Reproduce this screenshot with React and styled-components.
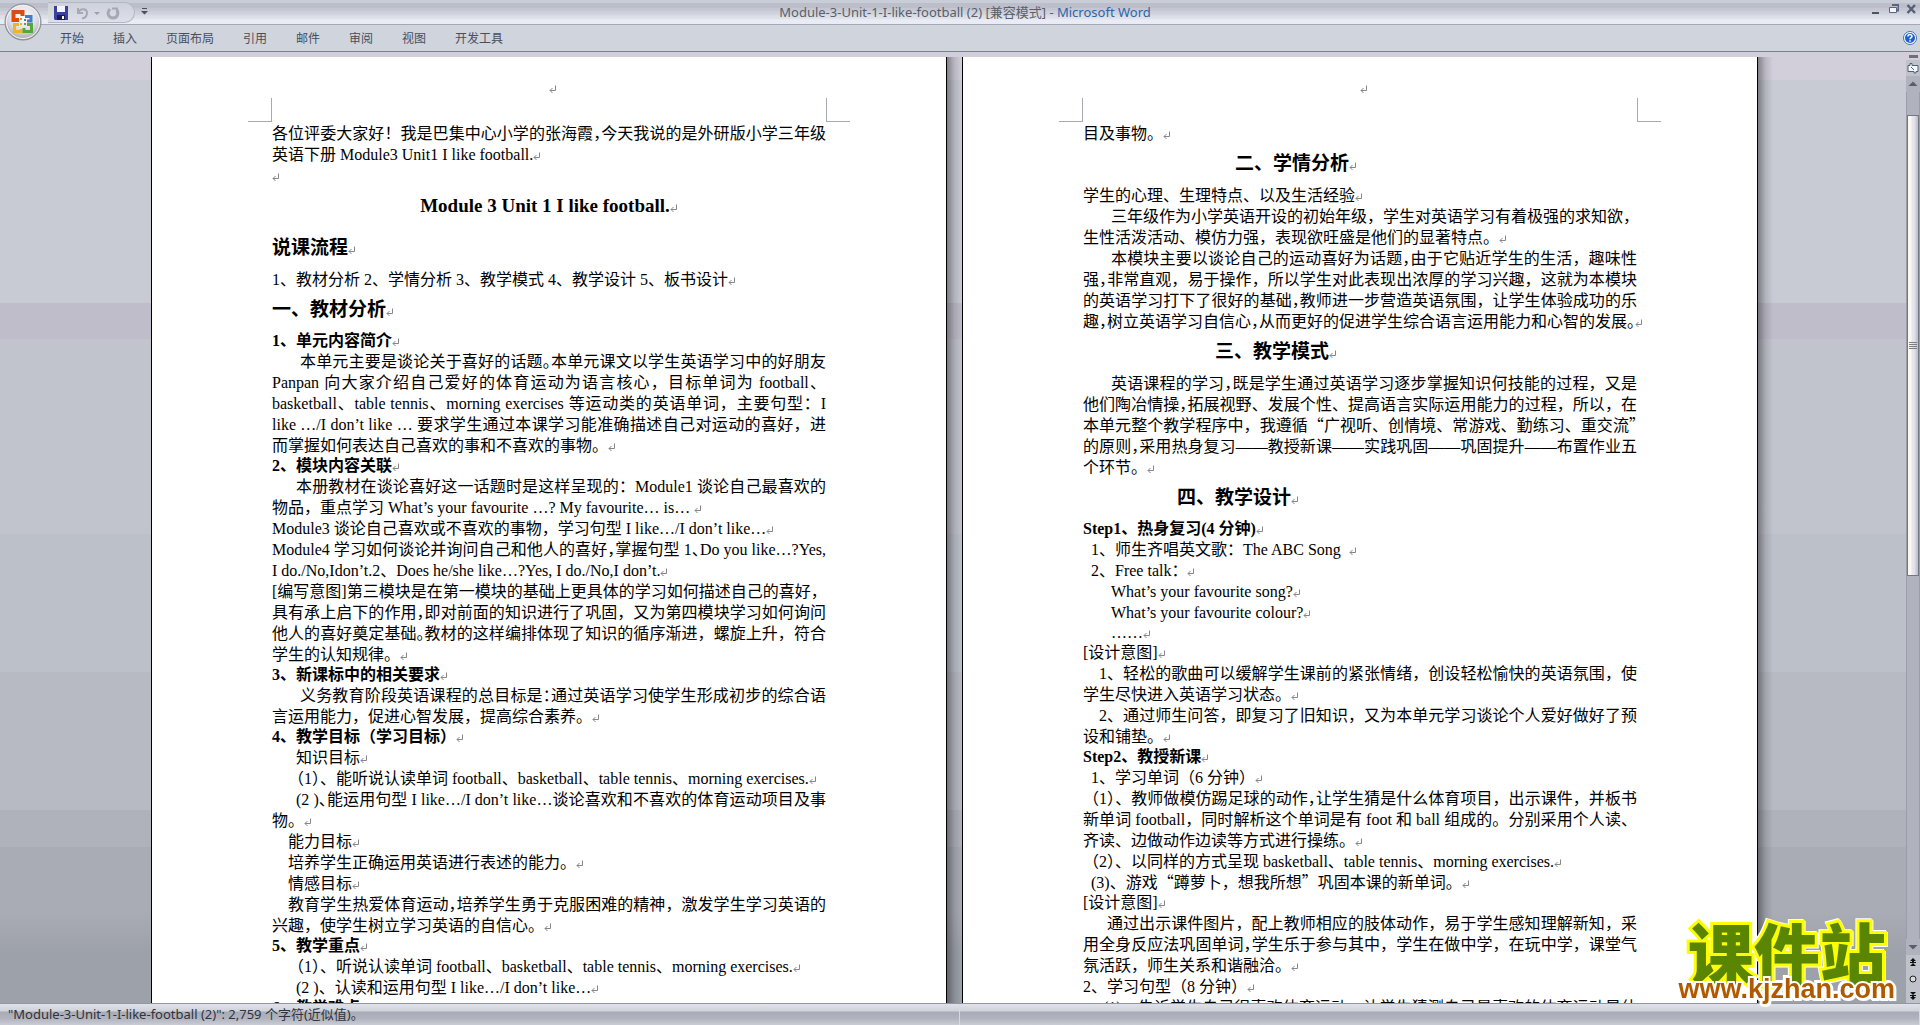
import React from 'react'
import styled, { createGlobalStyle, css } from 'styled-components'

const GlobalStyle = createGlobalStyle`
  * {
    box-sizing: border-box;
  }
  body {
    margin: 0;
    background: #c8cbd3;
  }
  button {
    border: 0;
    padding: 0;
    background: none;
    font: inherit;
    color: inherit;
    display: flex;
    align-items: center;
    justify-content: center;
  }
  svg {
    display: block;
  }
`

const Janela = styled.div`
  display: flex;
  flex-direction: column;
  height: 100vh;
  position: relative;
  overflow: hidden;
  font-family: "Noto Sans", "Noto Sans CJK SC", sans-serif;
  font-size: 12px;
  color: #3f4452;
`
const BarraTitulo = styled.header`
  display: flex;
  align-items: flex-start;
  flex: none;
  height: 25px;
  padding: 2px 2px 0 48px;
  background: linear-gradient(#c9cdd7 0 3px, #bcbfc9 3px 8px, #c4c7d1 8px 10px, #ced2db 12px 14px, #dcdfe7 16px 18px, #e9ecf4 20px);
  border-bottom: 1px solid #a5a8b4;
`
const AcessoRapido = styled.div`
  display: flex;
  align-items: center;
  gap: 6px;
  width: 87px;
  height: 21px;
  padding-left: 6px;
  background: linear-gradient(#ced1da, #dde0e8);
  border: 1px solid #b4b7c2;
  border-left: 0;
  border-radius: 0 11px 11px 0;
`
const MaisComandos = styled.button`
  width: 18px;
  height: 18px;
`
const Titulo = styled.h1`
  flex: 1;
  margin: 0;
  padding-right: 92px;
  text-align: center;
  font-size: 13px;
  line-height: 20px;
  font-weight: 400;
  color: #5b5d6b;
  span {
    color: #2a66ad;
  }
`
const BotoesJanela = styled.div`
  display: flex;
  gap: 5px;
  button {
    width: 13px;
    height: 13px;
  }
`
const BotaoOffice = styled.button`
  position: absolute;
  left: 4px;
  top: 3px;
  width: 38px;
  height: 38px;
  z-index: 2;
`
const Faixa = styled.nav`
  display: flex;
  align-items: center;
  flex: none;
  height: 27px;
  padding: 0 3px 0 46px;
  background: #d0d4dd;
  border-bottom: 1px solid #7b818e;
`
const Aba = styled.button`
  height: 26px;
  padding: 0 14px;
  margin-right: 1px;
  font-size: 12px;
  color: #4a4e5c;
`
const Ajuda = styled.button`
  margin-left: auto;
`
const Area = styled.main`
  display: flex;
  flex: 1;
  min-height: 0;
`
const Mesa = styled.div`
  display: flex;
  flex: 1;
  min-width: 0;
  justify-content: center;
  padding: 5px 0 0 18px;
  overflow: hidden;
  background: linear-gradient(
    #d2cfdb 0 28px,
    #c8cbd4 28px 251px,
    #c0bdcb 251px 287px,
    #c1c4cd 287px 482px,
    #bcc0c9 482px 620px,
    #b7bac3 620px 758px,
    #afb2bb 758px 795px,
    #a9acb5 795px 860px,
    #9da1aa 900px
  );
`
const Pagina = styled.article`
  flex: none;
  width: 796px;
  padding: 0 120px;
  background: #fff;
  border: solid #000;
  border-width: 0 1px;
  font-family: "Liberation Serif", "Noto Sans CJK SC", serif;
  font-size: 16px;
  color: #000;
`
const Sombra = styled.div`
  flex: none;
  width: 15px;
  background: linear-gradient(90deg, rgba(0, 0, 0, 0.38), rgba(0, 0, 0, 0.12) 50%, transparent);
`
const Cabecalho = styled.div`
  display: flex;
  align-items: center;
  justify-content: center;
  height: 41px;
  padding: 24px 0 0 8px;
`
const Cantos = styled.div`
  display: flex;
  justify-content: space-between;
  margin: 0 -24px 1px;
`
const Canto = styled.div`
  width: 24px;
  height: 24px;
  border: solid #a8a8b2;
  border-width: ${props => props.$direito ? '0 0 1px 1px' : '0 1px 1px 0'};
`
const Paragrafo = styled.p`
  margin: 0;
  line-height: ${props => props.$baixo ? 20 : 21}px;
  text-indent: ${props => props.$recuo || 0}px;
`
const Subtitulo = styled.h3`
  margin: 0;
  font-size: 16px;
  line-height: 20px;
`
const Secao = styled.h2`
  margin: 8px 0 9px;
  padding-left: ${props => props.$recuo || 0}px;
  font-size: 19px;
  line-height: 24px;
  ${props => props.$centro && css`
    margin-bottom: 18px;
    text-align: center;
  `}
`
const Linha = styled.span`
  display: block;
  white-space: pre;
  text-align-last: ${props => props.$cheia ? 'justify' : 'auto'};
  & + & {
    text-indent: 0;
  }
`
const Pontuacao = styled.span`
  font-family: "Noto Sans CJK SC", sans-serif;
  line-height: 1;
  font-feature-settings: ${props => props.$meia ? '"halt"' : 'normal'};
`
const Marca = styled.svg`
  display: inline-block;
  vertical-align: -1px;
`
const Rolagem = styled.aside`
  display: flex;
  flex-direction: column;
  flex: none;
  width: 14px;
  background: #b9bcc5;
`
const Divisor = styled.div`
  flex: none;
  height: 8px;
  padding: 3px 2px 2px 3px;
  background: #d2cfdb;
  &::before {
    content: "";
    display: block;
    height: 3px;
    background: #6d7079;
  }
`
const BotaoRolagem = styled.button`
  flex: none;
  height: 16px;
  background: ${props => props.$claro ? '#bfc2cb' : '#b0b3bd'};
`
const Trilho = styled.div`
  flex: 1;
  padding-top: 23px;
  background: #b0b3bd;
  border: solid #9b9ea8;
  border-width: 0 1px;
`
const Alca = styled.div`
  display: flex;
  align-items: center;
  justify-content: center;
  height: 56%;
  border: 1px solid #74777f;
  background: linear-gradient(90deg, #fbf9ef 0 3px, #e6e4ee 4px 6px, #cdd0db 8px, #b9bdc8);
`
const BarraStatus = styled.footer`
  display: flex;
  flex: none;
  height: 22px;
  border-top: 1px solid #94979f;
  background: linear-gradient(#dfe2e9, #cfd2da 7px, #a9acb6 8px, #b0b3bd 14px, #c9ccd4);
`
const Campo = styled.div`
  flex: 1;
  padding-left: 8px;
  font-size: 13px;
  line-height: 20px;
  color: #2f323c;
  border-right: 1px solid #d8dae1;
`
const Selo = styled.div`
  position: absolute;
  right: 25px;
  bottom: 22px;
  display: flex;
  flex-direction: column;
  align-items: center;
  pointer-events: none;
  filter: drop-shadow(1px 1px 0 #fff) drop-shadow(-1px -1px 0 #fff);
`
const SeloNome = styled.strong`
  font-family: "Noto Sans CJK SC", sans-serif;
  font-size: 66px;
  font-weight: 900;
  line-height: 50px;
  color: #5a8500;
  -webkit-text-stroke: 6px #fcff00;
  paint-order: stroke fill;
`
const SeloSite = styled.span`
  font-family: "Liberation Sans", sans-serif;
  font-size: 27px;
  font-weight: 700;
  line-height: 28px;
  color: #b05a00;
  -webkit-text-stroke: 4px #fff;
  paint-order: stroke fill;
`

const abas = ['开始', '插入', '页面布局', '引用', '邮件', '审阅', '视图', '开发工具']

// "~" before a punctuation mark sets it at half width
const pagina1 = [
  { linhas: ['各位评委大家好！我是巴集中心小学的张海霞~，今天我说的是外研版小学三年级', '英语下册 Module3 Unit1 I like football.'] },
  { linhas: [''] },
  { tipo: 'secao', centro: true, linhas: ['Module 3 Unit 1 I like football.'] },
  { tipo: 'secao', linhas: ['说课流程'] },
  { linhas: ['1、教材分析 2、学情分析 3、教学模式 4、教学设计 5、板书设计'] },
  { tipo: 'secao', linhas: ['一、教材分析'] },
  { tipo: 'sub', linhas: ['1、单元内容简介'] },
  {
    recuo: 28,
    linhas: [
      '本单元主要是谈论关于喜好的话题~。本单元课文以学生英语学习中的好朋友',
      'Panpan 向大家介绍自己爱好的体育运动为语言核心，目标单词为 football、',
      'basketball、table tennis、morning exercises 等运动类的英语单词，主要句型：I',
      'like …/I don’t like … 要求学生通过本课学习能准确描述自己对运动的喜好，进',
      '而掌握如何表达自己喜欢的事和不喜欢的事物。',
    ],
  },
  { tipo: 'sub', linhas: ['2、模块内容关联'] },
  { recuo: 24, linhas: ['本册教材在谈论喜好这一话题时是这样呈现的：Module1 谈论自己最喜欢的', '物品，重点学习 What’s your favourite …? My favourite… is… '] },
  { linhas: ['Module3 谈论自己喜欢或不喜欢的事物，学习句型 I like…/I don’t like…'] },
  { linhas: ['Module4 学习如何谈论并询问自己和他人的喜好~，掌握句型 1~、Do you like…?Yes,', 'I do./No,Idon’t.2、Does he/she like…?Yes, I do./No,I don’t.'] },
  {
    linhas: [
      '[编写意图]第三模块是在第一模块的基础上更具体的学习如何描述自己的喜好，',
      '具有承上启下的作用~，即对前面的知识进行了巩固，又为第四模块学习如何询问',
      '他人的喜好奠定基础~。教材的这样编排体现了知识的循序渐进，螺旋上升，符合',
      '学生的认知规律。',
    ],
  },
  { tipo: 'sub', linhas: ['3、新课标中的相关要求'] },
  { recuo: 28, linhas: ['义务教育阶段英语课程的总目标是~：通过英语学习使学生形成初步的综合语', '言运用能力，促进心智发展，提高综合素养。'] },
  { tipo: 'sub', linhas: ['4、教学目标（学习目标）'] },
  { recuo: 24, linhas: ['知识目标'] },
  { recuo: 16, linhas: ['（1）、能听说认读单词 football、basketball、table tennis、morning exercises.'] },
  { recuo: 24, linhas: ['(2 )~、能运用句型 I like…/I don’t like…谈论喜欢和不喜欢的体育运动项目及事', '物。'] },
  { recuo: 16, linhas: ['能力目标'] },
  { recuo: 16, linhas: ['培养学生正确运用英语进行表述的能力。'] },
  { recuo: 16, linhas: ['情感目标'] },
  { recuo: 16, linhas: ['教育学生热爱体育运动~，培养学生勇于克服困难的精神，激发学生学习英语的', '兴趣，使学生树立学习英语的自信心。'] },
  { tipo: 'sub', linhas: ['5、教学重点'] },
  { recuo: 16, linhas: ['（1）、听说认读单词 football、basketball、table tennis、morning exercises.'] },
  { recuo: 24, linhas: ['(2 )、认读和运用句型 I like…/I don’t like…'] },
  { tipo: 'sub', linhas: ['6、教学难点'] },
]

const pagina2 = [
  { linhas: ['目及事物。'] },
  { tipo: 'secao', recuo: 152, linhas: ['二、学情分析'] },
  { linhas: ['学生的心理、生理特点、以及生活经验'] },
  { recuo: 28, linhas: ['三年级作为小学英语开设的初始年级，学生对英语学习有着极强的求知欲，', '生性活泼活动、模仿力强，表现欲旺盛是他们的显著特点。'] },
  {
    recuo: 28,
    linhas: [
      '本模块主要以谈论自己的运动喜好为话题~，由于它贴近学生的生活，趣味性',
      '强~，非常直观，易于操作，所以学生对此表现出浓厚的学习兴趣，这就为本模块',
      '的英语学习打下了很好的基础~，教师进一步营造英语氛围，让学生体验成功的乐',
      '趣~，树立英语学习自信心~，从而更好的促进学生综合语言运用能力和心智的发展~。',
    ],
  },
  { tipo: 'secao', recuo: 132, linhas: ['三、教学模式'] },
  {
    recuo: 28,
    linhas: [
      '英语课程的学习~，既是学生通过英语学习逐步掌握知识何技能的过程，又是',
      '他们陶冶情操~，拓展视野、发展个性、提高语言实际运用能力的过程，所以，在',
      '本单元整个教学程序中，我遵循“广视听、创情境、常游戏、勤练习、重交流~”',
      '的原则~，采用热身复习——教授新课——实践巩固——巩固提升——布置作业五',
      '个环节。',
    ],
  },
  { tipo: 'secao', recuo: 94, linhas: ['四、教学设计'] },
  { tipo: 'sub', linhas: ['Step1、热身复习(4 分钟)'] },
  { recuo: 8, linhas: ['1、师生齐唱英文歌：The ABC Song  '] },
  { recuo: 8, linhas: ['2、Free talk：'] },
  { recuo: 28, linhas: ['What’s your favourite song?'] },
  { recuo: 28, linhas: ['What’s your favourite colour?'] },
  { recuo: 28, baixo: true, linhas: ['……'] },
  { baixo: true, linhas: ['[设计意图]'] },
  { recuo: 16, linhas: ['1、轻松的歌曲可以缓解学生课前的紧张情绪，创设轻松愉快的英语氛围，使', '学生尽快进入英语学习状态。'] },
  { recuo: 16, linhas: ['2、通过师生问答，即复习了旧知识，又为本单元学习谈论个人爱好做好了预', '设和铺垫。'] },
  { tipo: 'sub', linhas: ['Step2、教授新课'] },
  { recuo: 8, linhas: ['1、学习单词（6 分钟）'] },
  {
    linhas: [
      '（1）、教师做模仿踢足球的动作~，让学生猜是什么体育项目，出示课件，并板书',
      '新单词 football，同时解析这个单词是有 foot 和 ball 组成的。分别采用个人读、',
      '齐读、边做动作边读等方式进行操练。',
    ],
  },
  { linhas: ['（2）、以同样的方式呈现 basketball、table tennis、morning exercises.'] },
  { recuo: 8, linhas: ['(3)、游戏“蹲萝卜，想我所想”巩固本课的新单词。'] },
  { baixo: true, linhas: ['[设计意图]'] },
  {
    recuo: 24,
    linhas: [
      '通过出示课件图片，配上教师相应的肢体动作，易于学生感知理解新知，采',
      '用全身反应法巩固单词~，学生乐于参与其中，学生在做中学，在玩中学，课堂气',
      '氛活跃，师生关系和谐融洽。',
    ],
  },
  { linhas: ['2、学习句型（8 分钟）'] },
  { recuo: 20, continua: true, linhas: ['(1)、告诉学生自己很喜欢体育运动，让学生猜测自己最喜欢的体育运动是什'] },
]

const MarcaParagrafo = () => (
  <Marca width="8" height="9" viewBox="0 0 8 9" fill="none" stroke="#85858a" aria-hidden="true">
    <path d="M6.5 0.5 V5.5 H1 M3.5 3 L1 5.5 L3.5 8" />
  </Marca>
)

const Texto = ({ children }) =>
  children.split(/(~.|[“”])/).map((parte, i) => (
    i % 2 ? <Pontuacao key={i} $meia={parte.length > 1}>{parte.slice(-1)}</Pontuacao> : parte
  ))

const tipos = { secao: Secao, sub: Subtitulo }

const Folha = ({ blocos }) => (
  <Pagina>
    <Cabecalho><MarcaParagrafo /></Cabecalho>
    <Cantos>
      <Canto />
      <Canto $direito />
    </Cantos>
    {blocos.map((bloco, i) => {
      const Bloco = tipos[bloco.tipo] || Paragrafo
      const fim = bloco.continua ? -1 : bloco.linhas.length - 1
      return (
        <Bloco key={i} $recuo={bloco.recuo} $centro={bloco.centro} $baixo={bloco.baixo}>
          {bloco.linhas.map((linha, j) => (
            <Linha key={j} $cheia={j !== fim}>
              <Texto>{linha}</Texto>
              {j === fim && <MarcaParagrafo />}
            </Linha>
          ))}
        </Bloco>
      )
    })}
  </Pagina>
)

const LogoOffice = () => (
  <svg width="38" height="38" viewBox="0 0 38 38">
    <defs>
      <radialGradient id="bola" cx="50%" cy="35%" r="65%">
        <stop offset="0" stopColor="#ffffff" />
        <stop offset="0.6" stopColor="#dcdde3" />
        <stop offset="1" stopColor="#a3a5ae" />
      </radialGradient>
    </defs>
    <circle cx="19" cy="19" r="18" fill="url(#bola)" stroke="#85868f" />
    <circle cx="19" cy="19" r="16.5" fill="none" stroke="#f4f4f7" />
    <g fill="none" strokeWidth="4">
      <path d="M15 17 H9.500 V9 H18.500 V13" stroke="#dd4a12" />
      <path d="M21 13.500 H27 V18 H23" stroke="#3f7fc6" strokeWidth="3" />
      <path d="M15 21.500 H10.500 V28.500 H17 V26" stroke="#f3b422" strokeWidth="3" />
      <path d="M23 21.500 H27.500 V28.500 H20 V25" stroke="#57a639" strokeWidth="3" />
    </g>
    <path d="M16 15 h2 v2 h-2z" fill="#f08a1c" />
    <path d="M20 16 h2 v2 h-2z" fill="#3f7fc6" />
    <path d="M16 20 h2 v2 h-2z" fill="#f3b422" />
    <path d="M20 20 h2 v2 h-2z" fill="#57a639" />
  </svg>
)

const Seta = ({ baixo, dupla }) => (
  <svg width="10" height="10" viewBox="0 0 10 10" fill={dupla ? '#111' : '#5a5e69'}>
    {dupla ? (
      <g transform={baixo ? 'rotate(180 5 5)' : undefined}>
        <path d="M5 0 L8 3 H6 V4 H8 V5 H2 V4 H4 V3 H2Z M5 5 L8 8 H2Z" />
      </g>
    ) : (
      <path d={baixo ? 'M0.500 3 H9.500 L5 7.500Z' : 'M0.500 7 H9.500 L5 2.500Z'} />
    )}
  </svg>
)

const App = () => (
  <Janela>
    <GlobalStyle />
    <BotaoOffice aria-label="Office"><LogoOffice /></BotaoOffice>
    <BarraTitulo>
      <AcessoRapido>
        <button aria-label="保存">
          <svg width="14" height="14" viewBox="0 0 14 14">
            <path d="M0 0 H14 V14 H1 L0 13Z" fill="#3a3fa0" />
            <path d="M3 0 H11 V6 H3Z" fill="#f2f4fb" />
            <path d="M3 9 H11 V14 H3Z" fill="#191c50" />
            <path d="M8 10 H10 V13 H8Z" fill="#fff" />
          </svg>
        </button>
        <button aria-label="撤消">
          <svg width="26" height="14" viewBox="0 0 26 14" fill="none" stroke="#a5a8b5" strokeWidth="2">
            <path d="M4 2 V7 H9 M4 7 C6 2 13 2 13 7 C13 10 11 12 8 12.500" />
            <path d="M20 6 H26 L23 9Z" fill="#9da0ac" stroke="none" />
          </svg>
        </button>
        <button aria-label="恢复">
          <svg width="14" height="14" viewBox="0 0 14 14" fill="none" stroke="#a5a8b5" strokeWidth="3">
            <path d="M4 3 C0 7 3 12 7 12 C11 12 13 8 11 4" />
            <path d="M6 2.500 H11 V7" strokeWidth="2" />
          </svg>
        </button>
      </AcessoRapido>
      <MaisComandos aria-label="自定义快速访问工具栏">
        <svg width="7" height="7" viewBox="0 0 7 7" fill="#4b4f5b">
          <path d="M1 0 H6 V1 H1Z M0 3 H7 L3.500 6.500Z" />
        </svg>
      </MaisComandos>
      <Titulo>Module-3-Unit-1-I-like-football (2) [兼容模式] - <span>Microsoft Word</span></Titulo>
      <BotoesJanela>
        <button aria-label="最小化">
          <svg width="10" height="10" viewBox="0 0 10 10"><path d="M1 8 H8 V10 H1Z" fill="#4e5364" /></svg>
        </button>
        <button aria-label="还原">
          <svg width="10" height="10" viewBox="0 0 10 10" fill="none" stroke="#5b6580">
            <path d="M3 1 H9.500 V6.500 H8" strokeWidth="2" />
            <path d="M0.500 3.500 H7.500 V8.500 H0.500Z" fill="#f3f5fb" />
          </svg>
        </button>
        <button aria-label="关闭">
          <svg width="11" height="10" viewBox="0 0 11 10" stroke="#566079" strokeWidth="2.500">
            <path d="M1.500 1 L9 9 M9 1 L1.500 9" />
          </svg>
        </button>
      </BotoesJanela>
    </BarraTitulo>
    <Faixa>
      {abas.map(aba => <Aba key={aba}>{aba}</Aba>)}
      <Ajuda aria-label="帮助">
        <svg width="14" height="14" viewBox="0 0 14 14">
          <circle cx="7" cy="7" r="6.500" fill="#fff" stroke="#4573ad" />
          <circle cx="7" cy="7" r="5" fill="#1f5fd0" />
          <path d="M5 5.500 C5 3 9 3 9 5.300 C9 6.700 7 6.500 7 8.300 M7 9.300 V10.800" fill="none" stroke="#fff" strokeWidth="1.500" />
        </svg>
      </Ajuda>
    </Faixa>
    <Area>
      <Mesa>
        <Folha blocos={pagina1} />
        <Sombra />
        <Folha blocos={pagina2} />
        <Sombra />
      </Mesa>
      <Rolagem>
        <Divisor />
        <BotaoRolagem $claro aria-label="标尺">
          <svg width="12" height="12" viewBox="0 0 12 12" fill="#f6f7fb" stroke="#4c6077">
            <path d="M1 3.500 H3 V1.500 H5 V3.500 H11 V9.500 H9 V11 H7 V9.500 H1Z" />
            <path d="M4 5 L7 8" />
          </svg>
        </BotaoRolagem>
        <BotaoRolagem aria-label="向上滚动"><Seta /></BotaoRolagem>
        <Trilho>
          <Alca>
            <svg width="8" height="8" viewBox="0 0 8 8" stroke="#7b7e88">
              <path d="M0 0.500 H8 M0 2.500 H8 M0 4.500 H8 M0 6.500 H8" />
            </svg>
          </Alca>
        </Trilho>
        <BotaoRolagem aria-label="向下滚动"><Seta baixo /></BotaoRolagem>
        <BotaoRolagem $claro aria-label="前一页"><Seta dupla /></BotaoRolagem>
        <BotaoRolagem $claro aria-label="选择浏览对象">
          <svg width="8" height="8" viewBox="0 0 8 8"><circle cx="4" cy="4" r="3" fill="#d8dae0" stroke="#222" /></svg>
        </BotaoRolagem>
        <BotaoRolagem $claro aria-label="下一页"><Seta dupla baixo /></BotaoRolagem>
      </Rolagem>
    </Area>
    <BarraStatus>
      <Campo>"Module-3-Unit-1-I-like-football (2)": 2,759 个字符(近似值)。</Campo>
      <Campo />
    </BarraStatus>
    <Selo>
      <SeloNome>课件站</SeloNome>
      <SeloSite>www.kjzhan.com</SeloSite>
    </Selo>
  </Janela>
)

export default App
